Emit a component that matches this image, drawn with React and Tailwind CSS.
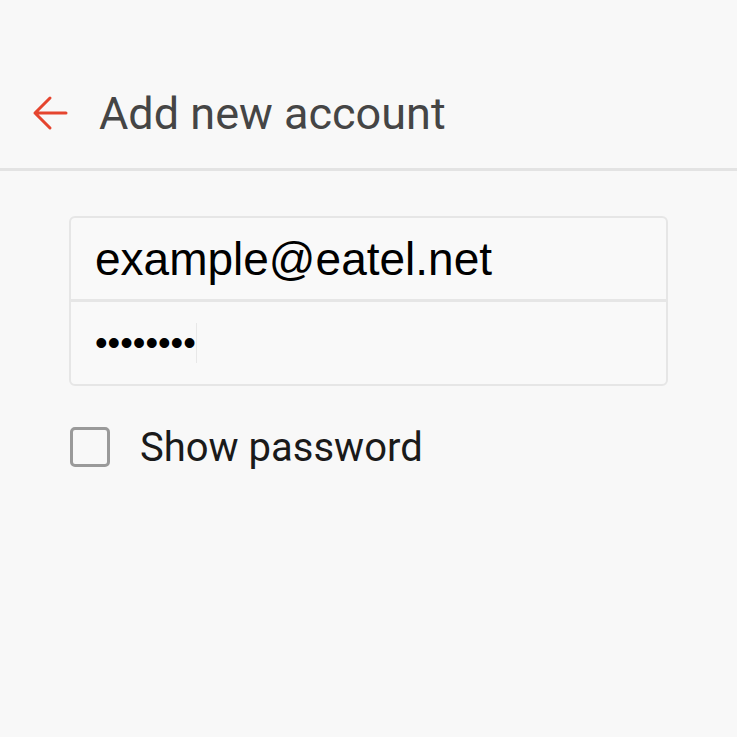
import React, { useState } from 'react'

const App = () => {
  const [show, setShow] = useState(false)

  return (
    <div className="w-[737px] h-[737px] bg-[#f8f8f8] overflow-hidden" style={{ fontFamily: 'Roboto, sans-serif' }}>
      {/* header */}
      <div className="h-[168px] flex items-center pt-[58px] pl-[32px]">
        <svg width="36" height="36" viewBox="0 0 36 36" fill="none" stroke="#e5452f" strokeWidth="3" strokeLinecap="round" strokeLinejoin="round">
          <path d="M34 18H3M18 3L3 18l15 15" />
        </svg>
        <h1 className="ml-[31px] text-[45px] leading-none text-[#454545] font-normal">Add new account</h1>
      </div>
      <div className="h-[3px] bg-[#e3e3e3]" />

      {/* form */}
      <div className="ml-[69px] mt-[45px] w-[599px] border-2 border-[#e6e6e6] rounded-[6px] bg-[#f9f9f9]">
        <div className="h-[84px] flex items-center pl-[24px] border-b-[3px] border-[#e6e6e6]">
          <span className="text-[46px] leading-none text-black" style={{ fontFamily: '"Liberation Sans", Arial, sans-serif' }}>example@eatel.net</span>
        </div>
        <div className="h-[82px] flex items-center pl-[24px]">
          <span className="text-[36px] leading-none text-black" style={{ fontFamily: '"Liberation Sans", Arial, sans-serif' }}>••••••••</span>
          <span className="w-px h-[40px] bg-[#e8e8e8]" />
        </div>
      </div>

      <div className="ml-[70px] mt-[39px] flex items-center cursor-pointer" onClick={() => setShow(!show)}>
        <div className="w-[40px] h-[40px] rounded-[5px] border-[3px] border-[#9a9a9a]" />
        <span className="ml-[30px] pt-[3px] text-[40px] leading-none text-[#1a1a1a]">Show password</span>
      </div>
    </div>
  )
}

export default App
